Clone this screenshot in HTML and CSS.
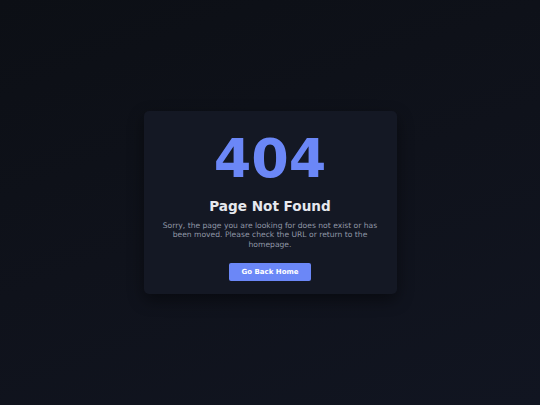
FILE: index.html
```html
<!DOCTYPE html>
<html lang="en">
<head>
<meta charset="utf-8">
<title>404 - Page Not Found</title>
<link rel="stylesheet" href="styles.css">
</head>
<body>
<main class="page">
  <section class="card">
    <h1 class="code">404</h1>
    <h2 class="title">Page Not Found</h2>
    <p class="message">Sorry, the page you are looking for does not exist or has been moved. Please check the URL or return to the homepage.</p>
    <a class="btn" href="#">Go Back Home</a>
  </section>
</main>
</body>
</html>
```
FILE: styles.css
```css
html, body {
  margin: 0;
  padding: 0;
  height: 100%;
}
body {
  font-family: "DejaVu Sans", Verdana, sans-serif;
  background: linear-gradient(160deg, #0c0f15 0%, #0f121b 50%, #111521 100%);
  color: #e2e4ea;
}
.page {
  min-height: 100%;
  display: flex;
  align-items: center;
  justify-content: center;
}
.card {
  width: 253px;
  box-sizing: border-box;
  padding: 20px 14px 13px;
  background: #141824;
  border-radius: 5px;
  box-shadow: 0 6px 16px rgba(0, 0, 0, 0.45);
  display: flex;
  flex-direction: column;
  align-items: center;
  text-align: center;
}
.code {
  margin: 0;
  font-size: 54px;
  line-height: 56px;
  font-weight: bold;
  color: #6b87f7;
}
.title {
  margin: 10px 0 0;
  font-size: 13.6px;
  line-height: 18px;
  font-weight: bold;
  color: #e6e8ee;
}
.message {
  margin: 6px 0 0;
  font-size: 7.6px;
  line-height: 9.4px;
  color: #9097a6;
}
.btn {
  margin-top: 14px;
  width: 82px;
  height: 18px;
  line-height: 18px;
  background: #6b87f7;
  color: #ffffff;
  font-size: 7px;
  font-weight: bold;
  text-decoration: none;
  border-radius: 2px;
}
```
